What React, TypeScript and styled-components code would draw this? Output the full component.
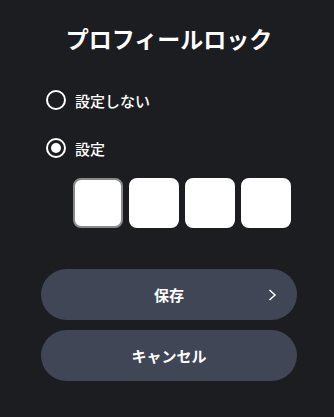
import React, { useState } from 'react';
import styled, { createGlobalStyle } from 'styled-components';

const GlobalStyle = createGlobalStyle`
	html, body {
		margin: 0;
		padding: 0;
		background: #1c1d21;
	}
	body {
		font-family: 'Noto Sans CJK JP', 'Noto Sans', sans-serif;
		color: #ffffff;
	}
`;

const Page = styled.div`
	width: 334px;
	height: 417px;
	box-sizing: border-box;
	padding: 22px 37px 0 41px;
	display: flex;
	flex-direction: column;
`;

const Title = styled.h1`
	margin: 0;
	font-size: 23px;
	line-height: 32px;
	font-weight: 700;
	text-align: center;
`;

const Options = styled.div`
	margin-top: 35px;
	display: flex;
	flex-direction: column;
	gap: 26px;
	padding-left: 5px;
`;

const RadioRow = styled.label`
	display: flex;
	align-items: center;
	gap: 9px;
	height: 22px;
	font-size: 15px;
	font-weight: 500;
	cursor: pointer;
`;

const RadioCircle = styled.span<{ $checked: boolean }>`
	width: 20px;
	height: 20px;
	box-sizing: border-box;
	border: 2px solid #ffffff;
	border-radius: 50%;
	display: flex;
	align-items: center;
	justify-content: center;

	&::after {
		content: '';
		width: 10px;
		height: 10px;
		border-radius: 50%;
		background: #ffffff;
		display: ${(p) => (p.$checked ? 'block' : 'none')};
	}
`;

const PinRow = styled.div`
	margin-top: 19px;
	padding-left: 32px;
	display: flex;
	gap: 6px;
`;

const PinBox = styled.input<{ $focused?: boolean }>`
	width: 50px;
	height: 50px;
	box-sizing: border-box;
	border-radius: 8px;
	background: #ffffff;
	border: 2px solid ${(p) => (p.$focused ? '#8a8a8a' : '#ffffff')};
	outline: none;
	text-align: center;
	font-size: 20px;
	padding: 0;
`;

const Buttons = styled.div`
	margin-top: 41px;
	display: flex;
	flex-direction: column;
	gap: 10px;
`;

const PillButton = styled.button`
	position: relative;
	height: 51px;
	border: none;
	border-radius: 26px;
	background: #414656;
	color: #ffffff;
	font-family: inherit;
	font-size: 15px;
	font-weight: 700;
	display: flex;
	align-items: center;
	justify-content: center;
	cursor: pointer;
`;

const Chevron = styled.svg`
	position: absolute;
	right: 20px;
	top: 50%;
	transform: translateY(-50%);
`;

export default function App() {
	const [mode, setMode] = useState<'off' | 'on'>('on');

	return (
		<>
			<GlobalStyle />
			<Page>
				<Title>プロフィールロック</Title>
				<Options>
					<RadioRow onClick={() => setMode('off')}>
						<RadioCircle $checked={mode === 'off'} />
						設定しない
					</RadioRow>
					<RadioRow onClick={() => setMode('on')}>
						<RadioCircle $checked={mode === 'on'} />
						設定
					</RadioRow>
				</Options>
				<PinRow>
					<PinBox $focused maxLength={1} />
					<PinBox maxLength={1} />
					<PinBox maxLength={1} />
					<PinBox maxLength={1} />
				</PinRow>
				<Buttons>
					<PillButton>
						保存
						<Chevron width="9" height="13" viewBox="0 0 9 13" fill="none">
							<path d="M1.5 1.5 L7 6.5 L1.5 11.5" stroke="#ffffff" strokeWidth="1.5" />
						</Chevron>
					</PillButton>
					<PillButton>キャンセル</PillButton>
				</Buttons>
			</Page>
		</>
	);
}
